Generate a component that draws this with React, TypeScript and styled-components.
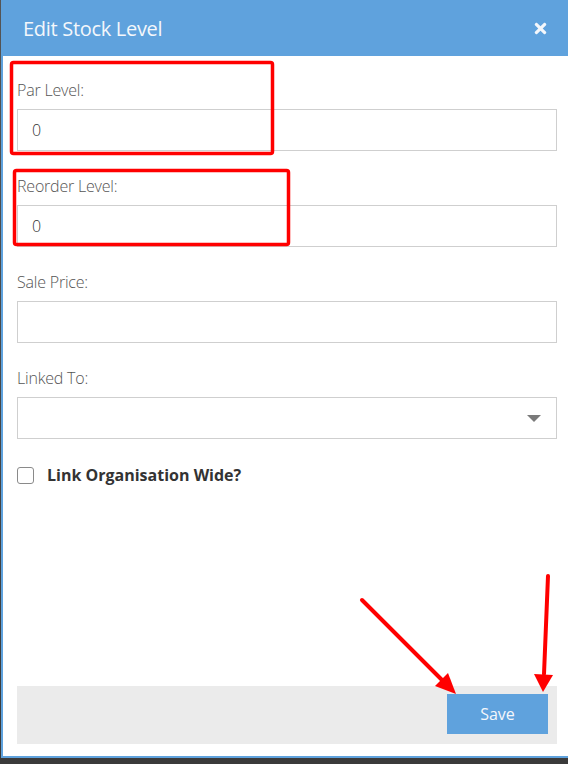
import styled, { createGlobalStyle } from "styled-components";
import { FaTimes } from "react-icons/fa";

const GlobalStyle = createGlobalStyle`
  html, body {
    margin: 0;
    padding: 0;
    background: #444;
  }
  body {
    font-family: "Open Sans", "Liberation Sans", sans-serif;
  }
`;

const Screen = styled.div`
  position: relative;
  width: 568px;
  height: 764px;
  padding-left: 1px;
  box-sizing: border-box;
  background: linear-gradient(#555, #3a3a3a);
`;

const Modal = styled.div`
  display: flex;
  flex-direction: column;
  width: 567px;
  height: 758px;
  box-sizing: border-box;
  background: #fff;
  border-left: 2px solid #5fa2dd;
  border-bottom: 2px solid #5fa2dd;
`;

const Header = styled.div`
  display: flex;
  align-items: center;
  justify-content: space-between;
  height: 56px;
  padding: 0 19px 0 20px;
  background: #5fa2dd;
  color: #f4f7fb;
`;

const Title = styled.h1`
  margin: 0;
  font-size: 20px;
  font-weight: 400;
  letter-spacing: -0.3px;
`;

const Close = styled.button`
  display: flex;
  padding: 0;
  border: none;
  background: none;
  color: #f4f7fb;
  cursor: pointer;
`;

const Body = styled.div`
  display: flex;
  flex-direction: column;
  flex: 1;
  padding: 24px 11px 12px 14px;
`;

const Field = styled.div`
  display: flex;
  flex-direction: column;
  margin-bottom: 25px;
`;

const Label = styled.label`
  height: 20px;
  margin-bottom: 9px;
  font-size: 16px;
  line-height: 20px;
  font-weight: 300;
  color: #555;
  letter-spacing: -0.2px;
`;

const Input = styled.input`
  height: 42px;
  box-sizing: border-box;
  padding: 0 14px;
  border: 1px solid #cfcfcf;
  font-family: inherit;
  font-size: 16px;
  font-weight: 300;
  color: #333;
  outline: none;
`;

const SelectBox = styled.div`
  display: flex;
  align-items: center;
  justify-content: flex-end;
  height: 42px;
  box-sizing: border-box;
  padding-right: 15px;
  border: 1px solid #cfcfcf;
`;

const Caret = styled.span`
  width: 0;
  height: 0;
  border-left: 7px solid transparent;
  border-right: 7px solid transparent;
  border-top: 7px solid #7a7a7a;
`;

const CheckRow = styled.label`
  display: flex;
  align-items: center;
  gap: 13px;
  font-size: 16px;
  font-weight: 700;
  color: #333;
`;

const Box = styled.span`
  width: 15px;
  height: 15px;
  border: 1.5px solid #8a8a8a;
  border-radius: 3px;
  background: #fff;
`;

const Footer = styled.div`
  display: flex;
  justify-content: flex-end;
  margin-top: auto;
  height: 58px;
  box-sizing: border-box;
  padding: 8px 9px 10px 0;
  background: #ebebeb;
`;

const SaveButton = styled.button`
  width: 101px;
  height: 40px;
  border: none;
  background: #5fa2dd;
  color: #f4f7fb;
  font-family: inherit;
  font-size: 16px;
  cursor: pointer;
`;

const Marks = styled.svg`
  position: absolute;
  left: 0;
  top: 0;
  pointer-events: none;
`;

const fields = [
  { label: "Par Level:", value: "0" },
  { label: "Reorder Level:", value: "0" },
  { label: "Sale Price:", value: "" },
];

export default function App() {
  return (
    <>
      <GlobalStyle />
      <Screen>
        <Modal>
          <Header>
            <Title>Edit Stock Level</Title>
            <Close aria-label="close">
              <FaTimes size={17} />
            </Close>
          </Header>
          <Body>
            {fields.map((f) => (
              <Field key={f.label}>
                <Label>{f.label}</Label>
                <Input defaultValue={f.value} />
              </Field>
            ))}
            <Field>
              <Label>Linked To:</Label>
              <SelectBox>
                <Caret />
              </SelectBox>
            </Field>
            <CheckRow>
              <Box />
              Link Organisation Wide?
            </CheckRow>
            <Footer>
              <SaveButton>Save</SaveButton>
            </Footer>
          </Body>
        </Modal>
        <Marks width="568" height="764" viewBox="0 0 568 764">
          <g fill="none" stroke="#f00" strokeWidth="3.5" strokeLinejoin="round">
            <rect x="11.5" y="62.5" width="261" height="91" rx="2" />
            <rect x="14.5" y="170.5" width="274" height="74" rx="2" />
          </g>
          <g stroke="#f00" strokeWidth="4" strokeLinecap="round">
            <line x1="362" y1="600" x2="444" y2="682" />
            <line x1="548" y1="576" x2="544" y2="674" />
          </g>
          <g fill="#f00">
            <polygon points="456,694 435,686 448,673" />
            <polygon points="543,692 534,674 553,675" />
          </g>
        </Marks>
      </Screen>
    </>
  );
}
